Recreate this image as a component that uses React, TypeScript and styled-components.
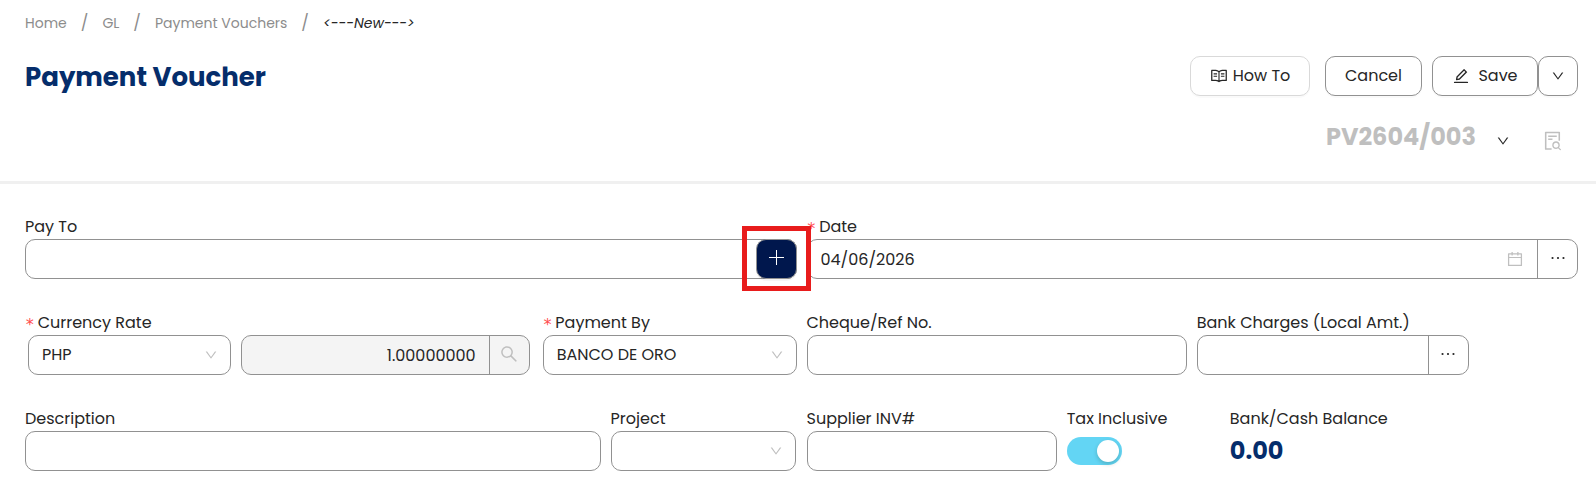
import React from 'react';
import styled, { createGlobalStyle, css } from 'styled-components';
import {
  AiOutlineCalendar,
  AiOutlineDown,
  AiOutlineEdit,
  AiOutlineEllipsis,
  AiOutlineFileSearch,
  AiOutlineRead,
  AiOutlineSearch,
} from 'react-icons/ai';

const color = {
  text: '#262626',
  muted: '#8c8c8c',
  faint: '#bfbfbf',
  line: '#919191',
  soft: '#d9d9d9',
  navy: '#052d6b',
  deep: '#00174d',
  red: '#ff4d4f',
  frame: '#e81c1c',
  sky: '#63d5f4',
};

const GlobalStyle = createGlobalStyle`
  *, *::before, *::after { box-sizing: border-box; }
  body {
    margin: 0;
    background: #fff;
    color: ${color.text};
    font-family: Poppins, Inter, sans-serif;
    font-size: 16px;
    line-height: 24px;
  }
  button, input, select { font: inherit; color: inherit; margin: 0; }
  button { cursor: pointer; }
  svg { flex: none; display: block; }
`;

const Header = styled.header`
  padding: 12px 18px 25px 25px;
  border-bottom: 3px solid #f0f0f0;
`;

const Trail = styled.ol`
  display: flex;
  align-items: center;
  gap: 14px;
  height: 22px;
  margin: 0;
  padding: 0;
  list-style: none;
  font-size: 14px;
`;

const TrailItem = styled.li`
  display: flex;
  align-items: center;
  gap: 14px;

  &:not(:last-child)::after {
    content: '/';
    color: ${color.muted};
    font-size: 16px;
  }
`;

const TrailLink = styled.a`
  color: ${color.muted};
  text-decoration: none;
`;

const TitleBar = styled.div`
  display: flex;
  justify-content: space-between;
  align-items: flex-start;
  margin-top: 22px;
`;

const Title = styled.h1`
  margin: 0;
  color: ${color.navy};
  font-size: 26px;
  line-height: 42px;
  font-weight: 700;
`;

const Actions = styled.div`
  display: flex;
  gap: 10px;
`;

const SplitButton = styled.div`
  display: flex;
`;

const Button = styled.button<{ $width: number; $soft?: boolean; $gap?: number }>`
  display: flex;
  align-items: center;
  justify-content: center;
  gap: ${(p) => p.$gap ?? 5}px;
  min-width: ${(p) => p.$width}px;
  height: 40px;
  padding: 0 12px;
  border: 1px solid ${(p) => (p.$soft ? color.soft : color.line)};
  border-radius: 10px;
  background: #fff;
  box-shadow: 0 2px 0 rgba(0, 0, 0, 0.02);
  white-space: nowrap;
  ${(p) => p.$soft && css`margin-right: 5px;`}
`;

const DocumentBar = styled.div`
  display: flex;
  justify-content: flex-end;
  align-items: center;
  margin-top: 20px;
  padding-right: 14px;
  height: 38px;
`;

const DocumentNumber = styled.span`
  color: ${color.faint};
  font-size: 24px;
  line-height: 38px;
  font-weight: 700;
`;

const IconButton = styled.button<{ $faint?: boolean; $space: number }>`
  display: flex;
  margin: 8px 0 0 ${(p) => p.$space}px;
  padding: 0;
  border: 0;
  background: none;
  color: ${(p) => (p.$faint ? color.faint : color.text)};
`;

const Form = styled.form`
  display: grid;
  grid-template-columns: minmax(0, 1fr) minmax(0, 1fr);
  column-gap: 10px;
  row-gap: 32px;
  padding: 31px 18px 21px 25px;
`;

const Group = styled.div<{ $columns: string; $gap?: number }>`
  display: grid;
  grid-template-columns: ${(p) => p.$columns};
  column-gap: ${(p) => p.$gap ?? 10}px;
`;

const Field = styled.div`
  min-width: 0;
`;

const Label = styled.label<{ $required?: boolean }>`
  display: block;
  height: 24px;
  white-space: nowrap;
  ${(p) =>
    p.$required &&
    css`
      &::before {
        content: '*';
        margin-right: 3px;
        color: ${color.red};
        font-family: 'DejaVu Sans Mono', monospace;
        font-size: 16px;
        line-height: 1;
        vertical-align: -2px;
      }
    `}
`;

const Box = styled.div<{ $disabled?: boolean }>`
  position: relative;
  display: flex;
  align-items: center;
  min-width: 0;
  height: 40px;
  border: 1px solid ${color.line};
  border-radius: 10px;
  background: ${(p) => (p.$disabled ? '#f4f4f4' : '#fff')};
`;

const TextInput = styled.input<{ $right?: boolean }>`
  flex: 1;
  min-width: 0;
  height: 100%;
  padding: 0 13px;
  border: 0;
  outline: 0;
  border-radius: 10px;
  background: transparent;
  text-align: ${(p) => (p.$right ? 'right' : 'left')};
`;

const Select = styled.select`
  width: 100%;
  height: 100%;
  padding: 0 32px 0 13px;
  border: 0;
  outline: 0;
  border-radius: 10px;
  background: transparent;
  appearance: none;
`;

const Arrow = styled(AiOutlineDown)`
  position: absolute;
  right: 12px;
  color: ${color.faint};
  pointer-events: none;
`;

const CalendarIcon = styled(AiOutlineCalendar)`
  margin-right: 13px;
  color: ${color.faint};
`;

const Addon = styled.button<{ $faint?: boolean }>`
  display: flex;
  align-items: center;
  justify-content: center;
  width: 40px;
  height: 100%;
  padding: 0 0 3px;
  border: 0;
  border-left: 1px solid ${color.line};
  background: none;
  color: ${(p) => (p.$faint ? color.faint : color.text)};
`;

const AddSlot = styled.div`
  position: absolute;
  top: -1px;
  right: -1px;
`;

const AddButton = styled.button`
  display: flex;
  align-items: center;
  justify-content: center;
  width: 41px;
  height: 40px;
  padding: 0 0 3px;
  border: 1px solid ${color.line};
  border-radius: 10px;
  background: ${color.deep};
  color: #fff;
  box-shadow: 0 2px 0 rgba(0, 0, 0, 0.04);
`;

const Highlight = styled.div`
  position: absolute;
  inset: -13px -14px -12px -14px;
  z-index: 1;
  border: 5px solid ${color.frame};
  pointer-events: none;
`;

const CurrencyBoxes = styled.div`
  display: grid;
  grid-template-columns: minmax(0, 203fr) minmax(0, 289fr);
  column-gap: 10px;
  padding-left: 3px;
`;

const Switch = styled.input`
  appearance: none;
  display: block;
  position: relative;
  width: 55px;
  height: 28px;
  && { margin: 6px 0 0; }
  border-radius: 14px;
  background: ${color.faint};
  cursor: pointer;

  &:checked { background: ${color.sky}; }

  &::after {
    content: '';
    position: absolute;
    top: 3px;
    left: 3px;
    width: 22px;
    height: 22px;
    border-radius: 50%;
    background: #fff;
    box-shadow: 0 2px 4px rgba(0, 35, 11, 0.2);
  }

  &:checked::after { left: 30px; }
`;

const Caption = styled.div`
  height: 24px;
  white-space: nowrap;
`;

const Balance = styled.output`
  display: block;
  color: ${color.navy};
  font-size: 24px;
  line-height: 40px;
  font-weight: 700;
`;

function PlusIcon() {
  return (
    <svg width="15" height="15" viewBox="0 0 15 15" fill="none" stroke="currentColor" aria-hidden="true">
      <path d="M7.5 0V15M0 7.5H15" />
    </svg>
  );
}

export default function App() {
  return (
    <>
      <GlobalStyle />
      <Header>
        <nav aria-label="Breadcrumb">
          <Trail>
            <TrailItem><TrailLink href="#home">Home</TrailLink></TrailItem>
            <TrailItem><TrailLink href="#gl">GL</TrailLink></TrailItem>
            <TrailItem><TrailLink href="#vouchers">Payment Vouchers</TrailLink></TrailItem>
            <TrailItem><em>&lt;---New---&gt;</em></TrailItem>
          </Trail>
        </nav>
        <TitleBar>
          <Title>Payment Voucher</Title>
          <Actions>
            <Button type="button" $width={120} $soft><AiOutlineRead size={18} />How To</Button>
            <Button type="button" $width={97}>Cancel</Button>
            <SplitButton>
              <Button type="button" $width={106} $gap={8}><AiOutlineEdit size={18} />Save</Button>
              <Button type="button" $width={40} aria-label="More save options"><AiOutlineDown size={14} /></Button>
            </SplitButton>
          </Actions>
        </TitleBar>
        <DocumentBar>
          <DocumentNumber>PV2604/003</DocumentNumber>
          <IconButton type="button" $space={20} aria-label="Choose number"><AiOutlineDown size={14} /></IconButton>
          <IconButton type="button" $space={32} $faint aria-label="Preview"><AiOutlineFileSearch size={22} /></IconButton>
        </DocumentBar>
      </Header>

      <Form onSubmit={(e) => e.preventDefault()}>
        <Field>
          <Label htmlFor="payTo">Pay To</Label>
          <Box>
            <TextInput id="payTo" />
            <AddSlot>
              <AddButton type="button" aria-label="Add payee"><PlusIcon /></AddButton>
              <Highlight />
            </AddSlot>
          </Box>
        </Field>
        <Field>
          <Label htmlFor="date" $required>Date</Label>
          <Box>
            <TextInput id="date" defaultValue="04/06/2026" />
            <CalendarIcon size={18} />
            <Addon type="button" aria-label="Date options"><AiOutlineEllipsis size={20} /></Addon>
          </Box>
        </Field>

        <Group $columns="minmax(0, 505fr) minmax(0, 254fr)" $gap={13}>
          <Field>
            <Label htmlFor="currency" $required>Currency Rate</Label>
            <CurrencyBoxes>
              <Box>
                <Select id="currency" defaultValue="PHP"><option>PHP</option></Select>
                <Arrow size={14} />
              </Box>
              <Box $disabled>
                <TextInput aria-label="Rate" $right readOnly value="1.00000000" />
                <Addon type="button" $faint aria-label="Look up rate"><AiOutlineSearch size={20} /></Addon>
              </Box>
            </CurrencyBoxes>
          </Field>
          <Field>
            <Label htmlFor="paymentBy" $required>Payment By</Label>
            <Box>
              <Select id="paymentBy" defaultValue="BANCO DE ORO"><option>BANCO DE ORO</option></Select>
              <Arrow size={14} />
            </Box>
          </Field>
        </Group>
        <Group $columns="minmax(0, 380fr) minmax(0, 272fr) minmax(0, 99fr)">
          <Field>
            <Label htmlFor="cheque">Cheque/Ref No.</Label>
            <Box><TextInput id="cheque" /></Box>
          </Field>
          <Field>
            <Label htmlFor="charges">Bank Charges (Local Amt.)</Label>
            <Box>
              <TextInput id="charges" />
              <Addon type="button" aria-label="Bank charge options"><AiOutlineEllipsis size={20} /></Addon>
            </Box>
          </Field>
        </Group>

        <Group $columns="minmax(0, 576fr) minmax(0, 186fr)">
          <Field>
            <Label htmlFor="description">Description</Label>
            <Box><TextInput id="description" /></Box>
          </Field>
          <Field>
            <Label htmlFor="project">Project</Label>
            <Box>
              <Select id="project" defaultValue=""><option value="" /></Select>
              <Arrow size={14} />
            </Box>
          </Field>
        </Group>
        <Group $columns="minmax(0, 250fr) minmax(0, 153fr) minmax(0, 348fr)">
          <Field>
            <Label htmlFor="supplierInv">Supplier INV#</Label>
            <Box><TextInput id="supplierInv" /></Box>
          </Field>
          <Field>
            <Label htmlFor="tax">Tax Inclusive</Label>
            <Switch id="tax" type="checkbox" role="switch" defaultChecked />
          </Field>
          <Field>
            <Caption>Bank/Cash Balance</Caption>
            <Balance>0.00</Balance>
          </Field>
        </Group>
      </Form>
    </>
  );
}
